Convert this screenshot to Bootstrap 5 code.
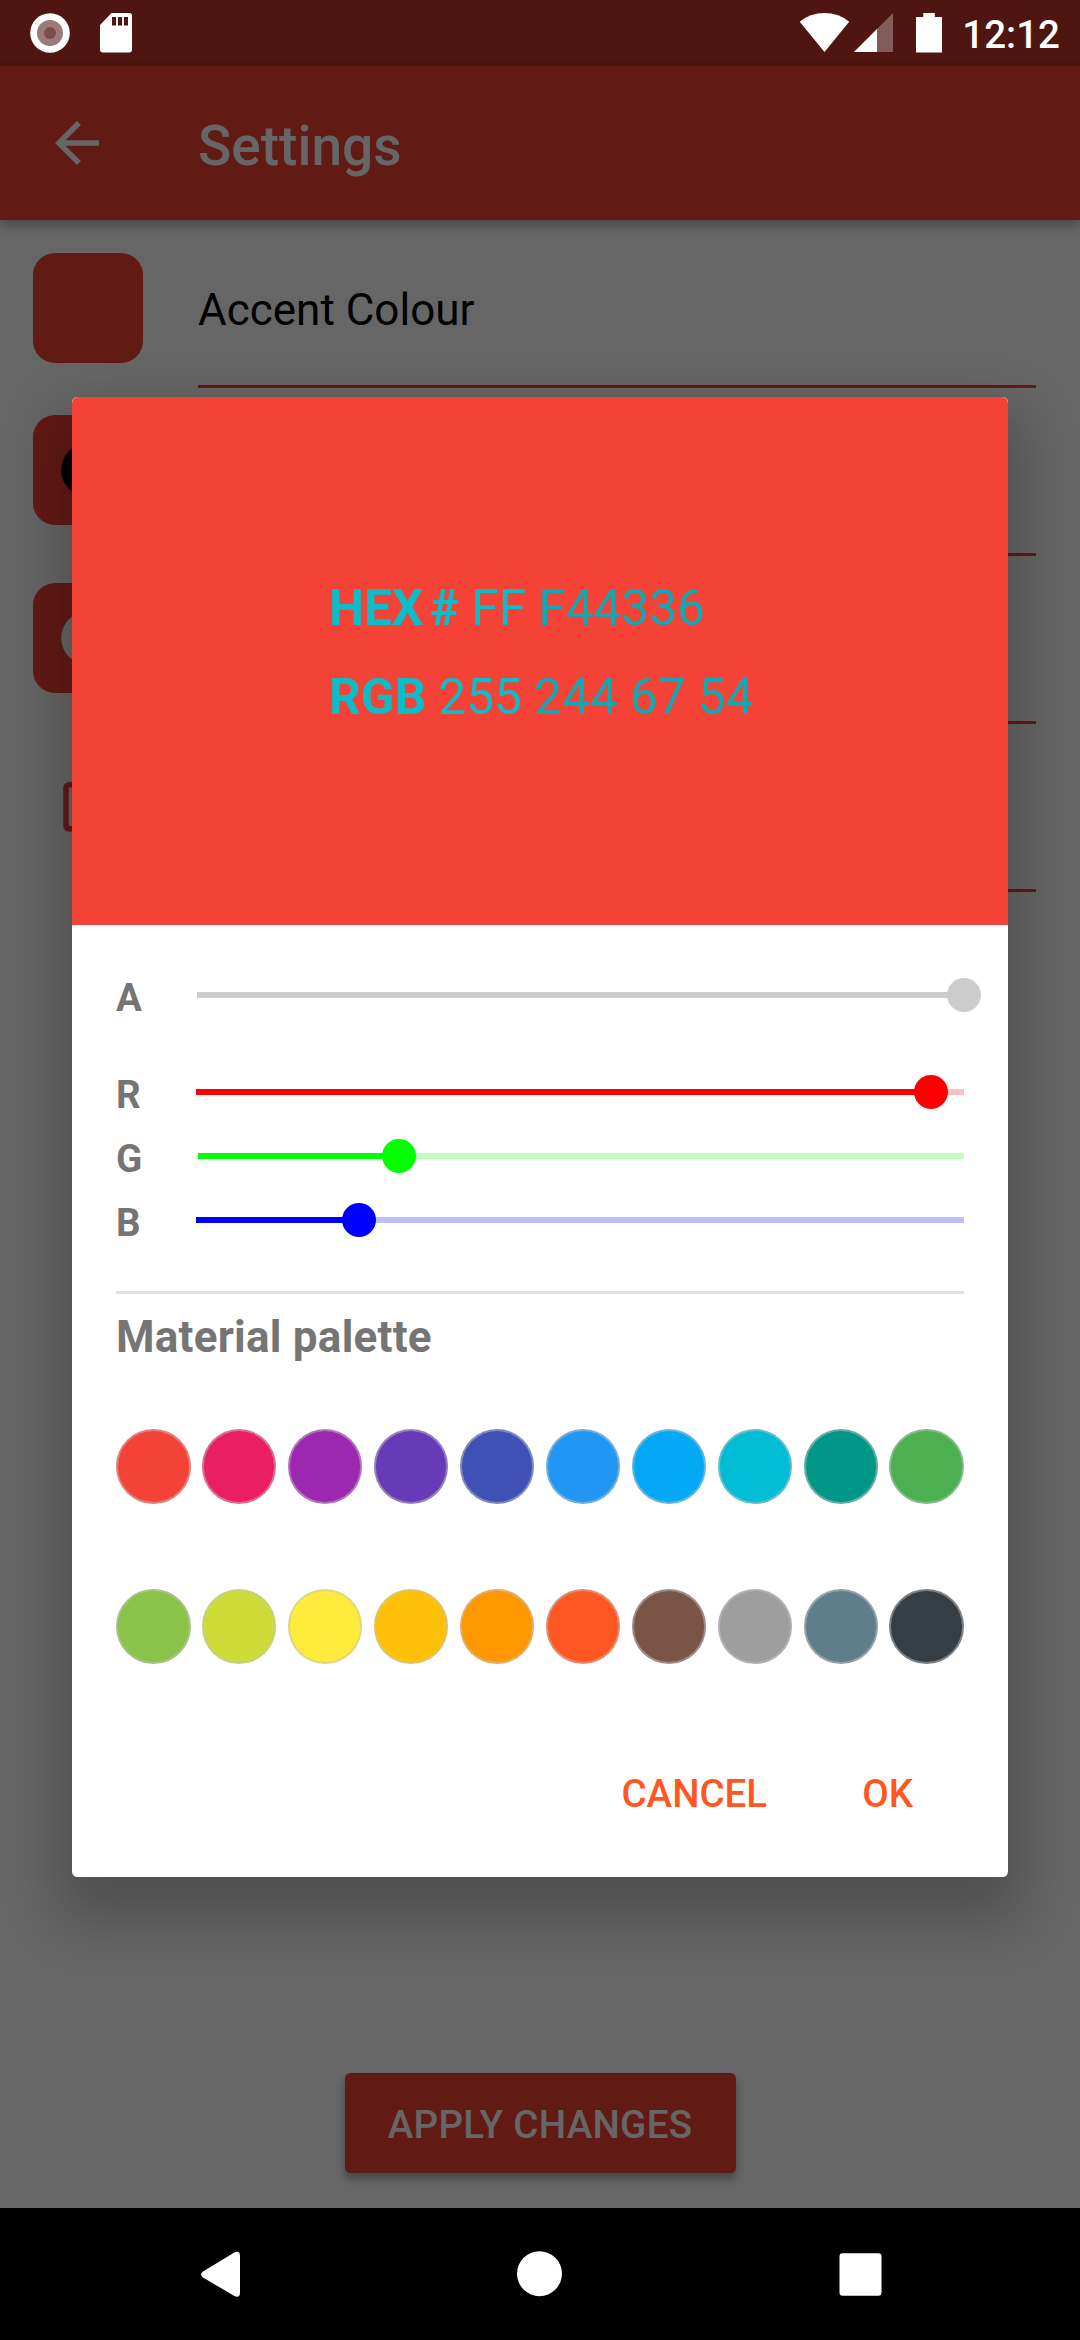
<!DOCTYPE html>
<html lang="en">
<head>
<meta charset="utf-8">
<meta name="viewport" content="width=device-width, initial-scale=1">
<title>Settings</title>
<link href="https://cdn.jsdelivr.net/npm/bootstrap@5.3.0/dist/css/bootstrap.min.css" rel="stylesheet">
<style>
  body { width: 1080px; height: 2340px; overflow: hidden; background: #fff; font-family: Roboto, sans-serif; color: #000; }
  .screen { height: 2208px; }
  .status-strip { height: 66px; background: #c3352b; }
  .status-icons { height: 66px; z-index: 3; color: #fff; }
  .clock { font-size: 38.5px; line-height: 66px; font-weight: 500; padding-top: 2px; }
  .app-header { height: 154px; background: #f44336; color: #fff; box-shadow: 0 5px 11px rgba(0,0,0,.3); padding-left: 44px; }
  .app-title { font-size: 55px; font-weight: 500; line-height: 60px; margin-left: 88px; padding-top: 6px; }
  .setting-row { height: 168px; padding-left: 33px; padding-right: 44px; }
  .setting-row:first-child .tile { margin-top: 33px; }
  .tile { width: 110px; height: 110px; margin-top: 27px; border-radius: 22px; background: #f44336; }
  .tile.bare { background: none; }
  .setting-text { border-bottom: 3px solid #f44336; margin-left: 55px; font-size: 44px; line-height: 60px; padding-top: 60px; }
  .apply-btn { width: 391px; height: 100px; margin-bottom: 35px; border-radius: 5.5px; background: #f44336; color: #fff; font-size: 38.5px; font-weight: 500; letter-spacing: .3px; border: 0; padding: 4px 0 0; box-shadow: 0 6px 8px rgba(0,0,0,.32); }
  .dim { background: rgba(0,0,0,.6); z-index: 2; padding-top: 397px; }
  .picker { width: 936px; height: 1480px; border-radius: 5.5px; background: #fff; box-shadow: 0 28px 56px 14px rgba(0,0,0,.23); }
  .preview { height: 528px; background: #f44336; padding: 167px 0 0 257px; font-size: 49.5px; line-height: 89px; white-space: pre; color: #0bbcc9; }
  .hash { margin-left: 6.5px; }
  .tone-b { color: #10a8b2; }
  .picker-body { padding: 38px 44px 0; }
  .slide-row { height: 64px; }
  .slide-name { width: 80px; font-size: 38.5px; font-weight: 700; line-height: 64px; color: #757575; padding-top: 5px; }
  .track { height: 6px; background: color-mix(in srgb, var(--hue) 26%, #fff); }
  .fill { height: 6px; background: var(--hue); }
  .thumb { width: 34px; height: 34px; top: -14px; right: -17px; background: var(--hue); }
  .divider { height: 3px; margin-top: 39px; background: #e0e0e0; }
  .palette-title { font-size: 44px; line-height: 60px; font-weight: 700; letter-spacing: .25px; color: #757575; margin-top: 13px; }
  .swatch { width: 74.5px; height: 74.5px; border: 2px solid rgba(196,196,196,.5); }
  .act { font-size: 38.5px; line-height: 100px; font-weight: 500; color: #ff5722; }
  .sys-nav { height: 132px; background: #000; }
</style>
</head>
<body>
<div class="screen position-relative overflow-hidden d-flex flex-column">
  <div class="status-strip flex-shrink-0"></div>
  <header class="app-header d-flex align-items-center flex-shrink-0 position-relative">
    <svg width="66" height="66" viewBox="0 0 24 24" fill="#fff"><path d="M20 11H7.83l5.59-5.59L12 4l-8 8 8 8 1.41-1.41L7.83 13H20v-2z"/></svg>
    <div class="app-title">Settings</div>
  </header>
  <main class="flex-grow-1">
    <div class="setting-row d-flex"><div class="tile flex-shrink-0"></div><div class="setting-text flex-fill">Accent Colour</div></div>
    <div class="setting-row d-flex"><div class="tile flex-shrink-0 d-flex align-items-center justify-content-center"><svg width="66" height="66" viewBox="0 0 24 24"><circle cx="12" cy="12" r="9.750"/></svg></div><div class="setting-text flex-fill"></div></div>
    <div class="setting-row d-flex"><div class="tile flex-shrink-0 d-flex align-items-center justify-content-center"><svg width="66" height="66" viewBox="0 0 24 24" fill="#fff"><circle cx="12" cy="12" r="9.750"/></svg></div><div class="setting-text flex-fill"></div></div>
    <div class="setting-row d-flex"><div class="tile bare flex-shrink-0 d-flex align-items-center justify-content-center"><svg width="66" height="66" viewBox="0 0 24 24" fill="none" stroke="#f44336" stroke-width="2"><rect x="4" y="4.3" width="16" height="16" rx="1"/></svg></div><div class="setting-text flex-fill"></div></div>
  </main>
  <button class="apply-btn btn align-self-center flex-shrink-0">APPLY CHANGES</button>

  <div class="dim position-absolute top-0 start-0 w-100 h-100">
    <section class="picker mx-auto overflow-visible">
      <div class="preview rounded-top"><div><b>HEX</b><b class="hash">#</b> FF <span class="tone-b">F44336</span></div><div><b>RGB</b> 255 <span class="tone-b">244 67 54</span></div></div>
      <div class="picker-body">
        <div class="slide-row d-flex align-items-center" style="--hue:#ccc"><div class="slide-name">A</div><div class="track flex-fill" style="margin-left:1px"><div class="fill position-relative" style="width:100%"><i class="thumb rounded-circle position-absolute"></i></div></div></div>
        <div class="slide-row d-flex align-items-center" style="--hue:#f00;margin-top:33px"><div class="slide-name">R</div><div class="track flex-fill"><div class="fill position-relative" style="width:95.7%"><i class="thumb rounded-circle position-absolute"></i></div></div></div>
        <div class="slide-row d-flex align-items-center" style="--hue:#0f0"><div class="slide-name">G</div><div class="track flex-fill" style="margin-left:2px"><div class="fill position-relative" style="width:26.25%"><i class="thumb rounded-circle position-absolute"></i></div></div></div>
        <div class="slide-row d-flex align-items-center" style="--hue:#00f"><div class="slide-name">B</div><div class="track flex-fill"><div class="fill position-relative" style="width:21.2%"><i class="thumb rounded-circle position-absolute"></i></div></div></div>
        <div class="divider"></div>
        <div class="palette-title">Material palette</div>
        <div class="d-flex justify-content-between" style="margin-top:62px">
          <i class="swatch rounded-circle" style="background:#f44336"></i><i class="swatch rounded-circle" style="background:#e91e63"></i><i class="swatch rounded-circle" style="background:#9c27b0"></i><i class="swatch rounded-circle" style="background:#673ab7"></i><i class="swatch rounded-circle" style="background:#3f51b5"></i><i class="swatch rounded-circle" style="background:#2196f3"></i><i class="swatch rounded-circle" style="background:#03a9f4"></i><i class="swatch rounded-circle" style="background:#00bcd4"></i><i class="swatch rounded-circle" style="background:#009688"></i><i class="swatch rounded-circle" style="background:#4caf50"></i>
        </div>
        <div class="d-flex justify-content-between" style="margin-top:85.5px">
          <i class="swatch rounded-circle" style="background:#8bc34a"></i><i class="swatch rounded-circle" style="background:#cddc39"></i><i class="swatch rounded-circle" style="background:#ffeb3b"></i><i class="swatch rounded-circle" style="background:#ffc107"></i><i class="swatch rounded-circle" style="background:#ff9800"></i><i class="swatch rounded-circle" style="background:#ff5722"></i><i class="swatch rounded-circle" style="background:#795548"></i><i class="swatch rounded-circle" style="background:#9e9e9e"></i><i class="swatch rounded-circle" style="background:#607d8b"></i><i class="swatch rounded-circle" style="background:#363e45"></i>
        </div>
        <div class="d-flex justify-content-end" style="margin-top:80px;padding-right:51px;gap:95px"><span class="act">CANCEL</span><span class="act">OK</span></div>
      </div>
    </section>
  </div>

  <div class="status-icons position-absolute top-0 start-0 w-100 d-flex align-items-start">
    <svg width="140" height="66" viewBox="0 0 140 66"><circle cx="50" cy="33" r="19.8" fill="#fff"/><circle cx="50" cy="33" r="13" fill="#9c7a77"/><circle cx="50" cy="33" r="6" fill="#7b4c49"/><path d="M111.500 13H129q3 0 3 3V49.500q0 3-3 3H103q-3 0-3-3V25z" fill="#fff"/><path d="M112 17h4v8.500h-4zM118 17h4v8.500h-4zM124 17h4v8.500h-4z" fill="#4e1511"/></svg>
    <svg class="ms-auto" width="160" height="66" viewBox="790 0 160 66" fill="#fff"><path d="M798.700 21.700Q809 13 823.500 13T848.200 21.700L823.500 52z"/><path d="M892 13V52H853z" opacity=".3"/><path d="M876 29V52H853z"/><path d="M922.300 13h11.500v4H941v35.500H915V17h7.300z"/></svg>
    <div class="clock" style="margin-left:11px;padding-right:20px">12:12</div>
  </div>
</div>
<nav class="sys-nav">
  <svg class="d-block" width="1080" height="132" viewBox="0 0 1080 132" fill="#fff"><path d="M203 63.500L233.500 45Q240 41.500 240 48V84.500Q240 91 233.500 87.500L203 69.500Q199 66.500 203 63.500z"/><circle cx="539.500" cy="65.700" r="22.500"/><rect x="839.500" y="45.300" width="42" height="42.400" rx="3"/></svg>
</nav>
<script src="https://cdn.jsdelivr.net/npm/bootstrap@5.3.0/dist/js/bootstrap.bundle.min.js"></script>
</body>
</html>
